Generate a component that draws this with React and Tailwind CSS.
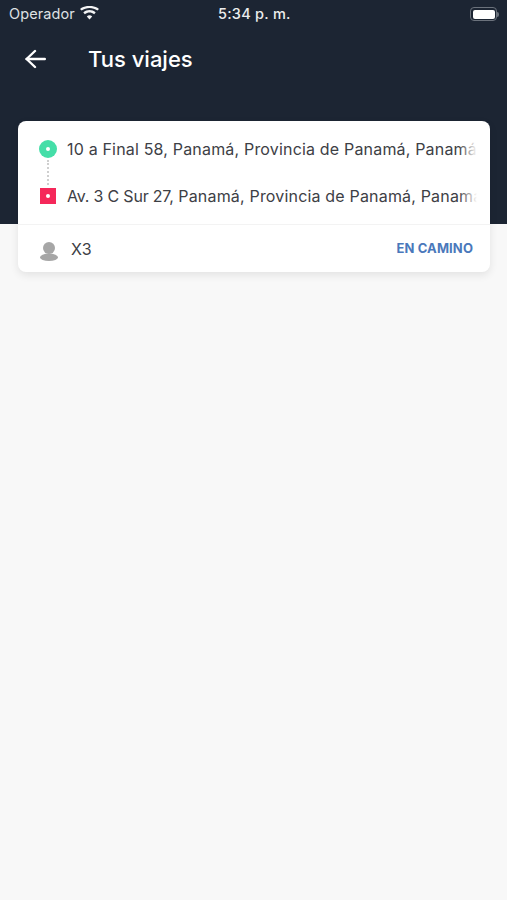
import React from "react";

function Wifi() {
  return (
    <svg width="19" height="14" viewBox="0 0 19 14" className="block">
      <path d="M9.5 13.5 L6.8 10.4 C8.4 9 10.6 9 12.2 10.4 Z" fill="#f2f3f4" />
      <path d="M4.9 8.3 L3.3 6.5 C6.9 3.3 12.1 3.3 15.7 6.5 L14.1 8.3 C11.4 5.9 7.6 5.9 4.9 8.3 Z" fill="#f2f3f4" />
      <path d="M1.6 4.6 L0 2.9 C5.4 -1.2 13.6 -1.2 19 2.9 L17.4 4.6 C12.8 1.2 6.2 1.2 1.6 4.6 Z" fill="#f2f3f4" />
    </svg>
  );
}

function Battery() {
  return (
    <div className="flex items-center">
      <div className="w-[27px] h-[14px] rounded-[4px] border-[1.5px] border-[#6b727c] p-[1.5px] flex">
        <div className="flex-1 rounded-[2px] bg-white" />
      </div>
      <div className="w-[2px] h-[5px] rounded-r-[2px] bg-[#6b727c]" />
    </div>
  );
}

function AddressRow({ children }) {
  return (
    <div className="relative flex-1 min-w-0 overflow-hidden whitespace-nowrap text-[16px] leading-[20px] tracking-[0.18px] text-[#3d4045]">
      {children}
      <div className="absolute right-0 top-0 bottom-0 w-[18px] bg-gradient-to-r from-white/0 to-white" />
    </div>
  );
}

export default function App() {
  return (
    <div className="w-[507px] h-[900px] overflow-hidden bg-[#f8f8f8] font-['Inter',sans-serif]">
      <header className="h-[224px] bg-[#1c2533] text-white">
        <div className="relative h-[28px] flex items-center justify-between pl-[9px] pr-[8px]">
          <div className="flex items-center gap-[5px] -mt-[1px]">
            <span className="text-[14.5px] tracking-[0.1px] text-[#dfe1e3]">Operador</span>
            <div className="-mt-[1px]"><Wifi /></div>
          </div>
          <span className="absolute left-[218px] top-[5px] text-[14.5px] leading-[18px] font-medium tracking-[0.25px] text-[#eceded]">5:34 p. m.</span>
          <Battery />
        </div>
        <div className="flex items-center h-[62px] pl-[25px]">
          <svg width="21" height="20" viewBox="0 0 21 20" fill="none" stroke="#ffffff" strokeWidth="2.4" strokeLinecap="round" strokeLinejoin="round">
            <path d="M19.8 10 H1.6" />
            <path d="M10 2 L1.6 10 L10 18" />
          </svg>
          <h1 className="ml-[42px] text-[22px] leading-[30px] font-medium text-white">Tus viajes</h1>
        </div>
      </header>

      <main className="relative -mt-[103px] mx-[18px] w-[472px] h-[151px] rounded-[8px] bg-white shadow-[0_3px_8px_rgba(0,0,0,0.09)] flex flex-col">
        <div className="h-[104px] pl-[21px] pr-[13px] pt-[18px] flex flex-col border-b border-[#f3f3f3]">
          <div className="flex items-center h-[20px] gap-[10px]">
            <div className="w-[18px] h-[18px] rounded-full bg-[#45dea8] flex items-center justify-center shrink-0">
              <div className="w-[4px] h-[4px] rounded-full bg-white" />
            </div>
            <AddressRow>10 a Final 58, Panamá, Provincia de Panamá, Panamá</AddressRow>
          </div>
          <div className="ml-[7.5px] my-[1px] h-[25px] w-0 border-l-2 border-dotted border-[#cfcfcf]" />
          <div className="flex items-center h-[20px] gap-[11px]">
            <div className="w-[16px] h-[16px] ml-[1px] bg-[#f5285a] flex items-center justify-center shrink-0">
              <div className="w-[4px] h-[4px] rounded-full bg-white" />
            </div>
            <AddressRow><span className="tracking-[-0.2px]">Av. 3 C Sur 27,</span> Panamá, Provincia de Panamá, Panamá</AddressRow>
          </div>
        </div>
        <div className="flex-1 flex items-center pl-[22px] pr-[17px]">
          <svg width="18" height="19" viewBox="0 0 18 19" fill="#a6a6a6" className="shrink-0 mt-[5px]">
            <circle cx="9" cy="6" r="6" />
            <ellipse cx="9" cy="15.3" rx="9" ry="3.7" />
          </svg>
          <span className="ml-[13px] text-[16px] tracking-[0.2px] text-[#3d4045]">X3</span>
          <span className="ml-auto text-[13px] font-bold tracking-[0.1px] text-[#4a78bb]">EN CAMINO</span>
        </div>
      </main>
    </div>
  );
}
